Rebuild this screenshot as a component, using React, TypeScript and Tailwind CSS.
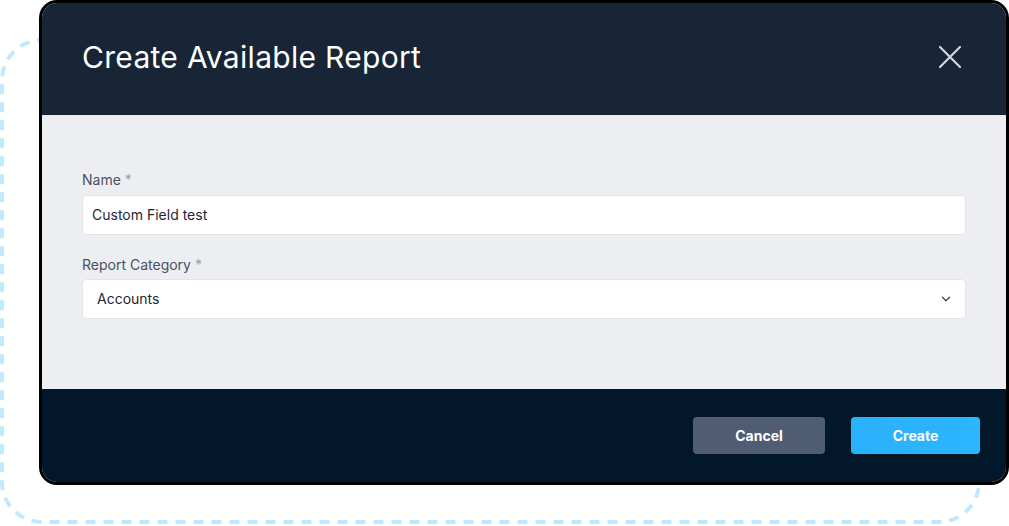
import { ChevronDown } from "lucide-react";

const font = { fontFamily: "Inter, 'Noto Sans', sans-serif" };

export default function App() {
  return (
    <div
      className="relative h-[526px] w-[1009px] overflow-hidden bg-white"
      style={font}
    >
      {/* decorative dashed frame behind the dialog */}
      <svg
        className="absolute left-0 top-0"
        width="1009"
        height="526"
        viewBox="0 0 1009 526"
      >
        <rect
          x="2"
          y="40"
          width="977"
          height="482"
          rx="40"
          fill="none"
          stroke="#bfe9fd"
          strokeWidth="4"
          strokeDasharray="10 8"
        />
      </svg>

      <div className="relative ml-[39px] flex h-[485px] w-[970px] flex-col overflow-hidden rounded-[18px] border-[3px] border-black">
        <div className="flex h-[112px] items-center justify-between bg-[#172536] pb-1 pl-10 pr-[45px]">
          <h1 className="text-[30px] font-normal tracking-[0.3px] text-white">
            Create Available Report
          </h1>
          <button className="text-[#d3d7dd]">
            <svg width="22" height="22" viewBox="0 0 22 22" fill="none">
              <path
                d="M1 1L21 21M21 1L1 21"
                stroke="currentColor"
                strokeWidth="2.2"
                strokeLinecap="round"
              />
            </svg>
          </button>
        </div>

        <div className="flex h-[274px] flex-col bg-[#edeef2] px-10 pt-[55px]">
          <label className="text-sm leading-5 text-[#4a5161]">
            Name <span className="text-[#9aa0ab]">*</span>
          </label>
          <div className="mt-[5px] flex h-10 items-center rounded-[4px] border border-[#e2e4e8] bg-white px-[9px] text-sm text-[#1f2633]">
            Custom Field test
          </div>

          <label className="mt-5 text-sm leading-5 text-[#4a5161]">
            Report Category <span className="text-[#9aa0ab]">*</span>
          </label>
          <div className="mt-1 flex h-10 items-center justify-between rounded-[4px] border border-[#e2e4e8] bg-white pl-[14px] pr-3 text-sm text-[#1f2633]">
            <span>Accounts</span>
            <ChevronDown size={14} strokeWidth={2.5} className="text-[#4a5161]" />
          </div>
        </div>

        <div className="flex flex-1 items-start justify-end gap-[26px] bg-[#03172a] pr-[26px] pt-[28px]">
          <button className="h-[37px] w-[132px] rounded-[4px] bg-gradient-to-r from-[#525c72] to-[#4f5d72] text-sm font-bold text-white">
            Cancel
          </button>
          <button className="h-[37px] w-[129px] rounded-[4px] bg-gradient-to-r from-[#2ab1fc] to-[#2cb6fe] text-sm font-bold text-white">
            Create
          </button>
        </div>
      </div>
    </div>
  );
}
